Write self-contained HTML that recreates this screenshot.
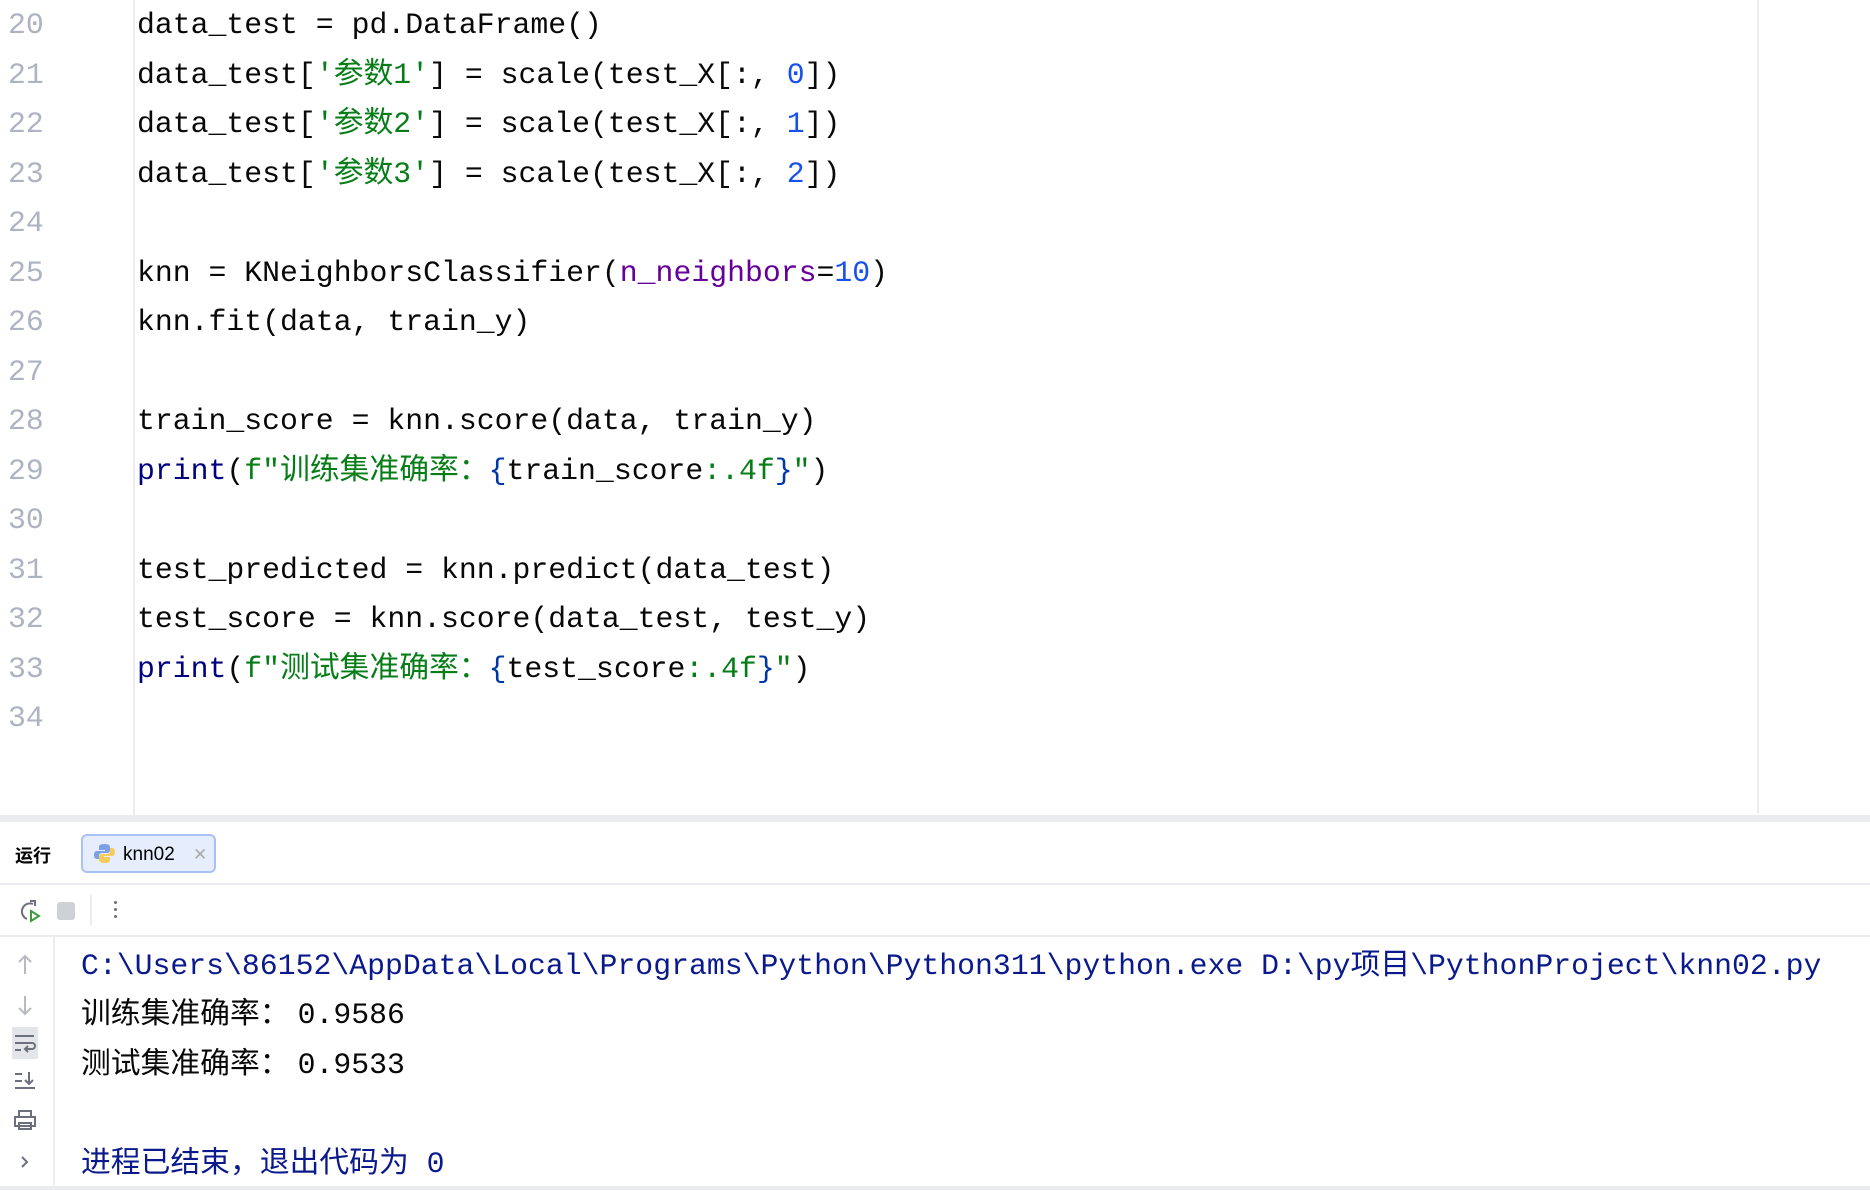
<!DOCTYPE html>
<html><head><meta charset="utf-8"><style>
*{margin:0;padding:0;box-sizing:border-box}
body{width:1870px;height:1190px;background:#fff;position:relative;overflow:hidden;font-family:"Liberation Mono","Noto Sans CJK SC",monospace;font-size:29.8px;color:#080808}
.ln{position:absolute;left:8px;color:#aeb3c2;line-height:49.5px;height:49.5px}
.cl{position:absolute;left:137px;line-height:49.5px;height:49.5px;white-space:pre}
.n{color:#1750eb}.s{color:#067d17}.k{color:#660099}.b{color:#000080}.br{color:#0037a6}
.cj{font-family:"Noto Sans CJK SC",sans-serif;line-height:0}
.con{position:absolute;left:81px;white-space:pre;line-height:49.5px;height:49.5px}
</style></head><body>
<div style="position:absolute;left:133px;top:0;width:2px;height:815px;background:#ebecf0"></div>
<div style="position:absolute;left:1757px;top:0;width:2px;height:813px;background:#ebecf0"></div>
<div class="ln" style="top:1px">20</div><div class="cl" style="top:1px">data_test = pd.DataFrame()</div>
<div class="ln" style="top:50.5px">21</div><div class="cl" style="top:50.5px">data_test[<span class="s">'<span class="cj">参数</span>1'</span>] = scale(test_X[:, <span class="n">0</span>])</div>
<div class="ln" style="top:100px">22</div><div class="cl" style="top:100px">data_test[<span class="s">'<span class="cj">参数</span>2'</span>] = scale(test_X[:, <span class="n">1</span>])</div>
<div class="ln" style="top:149.5px">23</div><div class="cl" style="top:149.5px">data_test[<span class="s">'<span class="cj">参数</span>3'</span>] = scale(test_X[:, <span class="n">2</span>])</div>
<div class="ln" style="top:199px">24</div>
<div class="ln" style="top:248.5px">25</div><div class="cl" style="top:248.5px">knn = KNeighborsClassifier(<span class="k">n_neighbors</span>=<span class="n">10</span>)</div>
<div class="ln" style="top:298px">26</div><div class="cl" style="top:298px">knn.fit(data, train_y)</div>
<div class="ln" style="top:347.5px">27</div>
<div class="ln" style="top:397px">28</div><div class="cl" style="top:397px">train_score = knn.score(data, train_y)</div>
<div class="ln" style="top:446.5px">29</div><div class="cl" style="top:446.5px"><span class="b">print</span>(<span class="s">f"<span class="cj">训练集准确率：</span></span><span class="br">{</span>train_score<span class="s">:.4f</span><span class="br">}</span><span class="s">"</span>)</div>
<div class="ln" style="top:496px">30</div>
<div class="ln" style="top:545.5px">31</div><div class="cl" style="top:545.5px">test_predicted = knn.predict(data_test)</div>
<div class="ln" style="top:595px">32</div><div class="cl" style="top:595px">test_score = knn.score(data_test, test_y)</div>
<div class="ln" style="top:644.5px">33</div><div class="cl" style="top:644.5px"><span class="b">print</span>(<span class="s">f"<span class="cj">测试集准确率：</span></span><span class="br">{</span>test_score<span class="s">:.4f</span><span class="br">}</span><span class="s">"</span>)</div>
<div class="ln" style="top:694px">34</div>

<div style="position:absolute;left:0;top:815px;width:1870px;height:7px;background:#ebecf0"></div>
<div style="position:absolute;left:15px;top:840px;font-family:'Noto Sans CJK SC',sans-serif;font-size:18px;font-weight:bold;line-height:30px;color:#000">运行</div>
<div style="position:absolute;left:81px;top:834px;width:135px;height:39px;border:2px solid #a9c1f5;background:#e6edfd;border-radius:6px"></div>
<svg style="position:absolute;left:94px;top:843px" width="21" height="21" viewBox="0 0 21 21"><path d="M10 1c-4 0-5 1.5-5 3v3h6v1H3c-2 0-3 1.5-3 4s1 4 3 4h2v-3c0-2 1.5-3 3-3h5c1.5 0 3-1 3-3V4c0-2-2-3-6-3z" fill="#7ba0e8"/><path d="M11 20c4 0 5-1.5 5-3v-3h-6v-1h8c2 0 3-1.5 3-4s-1-4-3-4h-2v3c0 2-1.5 3-3 3H8c-1.5 0-3 1-3 3v3c0 2 2 3 6 3z" fill="#f5cb5c"/></svg>
<div style="position:absolute;left:123px;top:840px;font-family:'Liberation Sans',sans-serif;font-size:19px;line-height:30px;color:#000">knn02</div>
<div style="position:absolute;left:193px;top:840px;font-family:'Liberation Sans',sans-serif;font-size:17px;line-height:30px;color:#aaa">✕</div>
<div style="position:absolute;left:0;top:883px;width:1870px;height:2px;background:#ebecf0"></div>
<svg style="position:absolute;left:16px;top:898px" width="26" height="26" viewBox="0 0 26 26"><path d="M17 6a8 8 0 1 0-6 15" fill="none" stroke="#6c707e" stroke-width="2"/><path d="M14 3h5v5" fill="none" stroke="#6c707e" stroke-width="2"/><path d="M15 13l8 5-8 5z" fill="none" stroke="#3d9b3d" stroke-width="2"/></svg>
<div style="position:absolute;left:57px;top:902px;width:18px;height:18px;background:#cfd1d6;border-radius:3px"></div>
<div style="position:absolute;left:90px;top:895px;width:2px;height:30px;background:#ebecf0"></div>
<div style="position:absolute;left:114px;top:901px;width:3px;height:3px;background:#6c707e;border-radius:2px;box-shadow:0 7px 0 #6c707e,0 14px 0 #6c707e"></div>
<div style="position:absolute;left:0;top:935px;width:1870px;height:2px;background:#ebecf0"></div>
<div style="position:absolute;left:53px;top:937px;width:2px;height:253px;background:#ebecf0"></div>
<svg style="position:absolute;left:12px;top:950px" width="26" height="230" viewBox="0 0 26 230" fill="none" stroke="#b8bac0" stroke-width="2">
<path d="M13 24V6M7 12l6-6 6 6"/><path d="M13 46v18M7 58l6 6 6-6"/>
<rect x="-4" y="77" width="33" height="32" rx="5" fill="#e4e5e9" stroke="none"/>
<path d="M3 86h19M3 93h17a3 3 0 0 1 0 6h-6M3 100h6M16 96l-3 3 3 3" stroke="#6c707e"/>
<path d="M3 124h7M3 131h7M3 138h20M17 122v12M13 130l4 4 4-4" stroke="#6c707e"/>
<path d="M7 167v-6h12v6M3 167h20v9H3zM7 173h12v6H7z" stroke="#6c707e"/>
<path d="M10 207l5 5-5 5" stroke="#6c707e"/></svg>
<div class="con" style="top:942px;color:#0a1a8c">C:\Users\86152\AppData\Local\Programs\Python\Python311\python.exe D:\py<span class="cj">项目</span>\PythonProject\knn02.py</div>
<div class="con" style="top:991px"><span class="cj">训练集准确率：</span><span style="margin-left:8px">0.9586</span></div>
<div class="con" style="top:1041px"><span class="cj">测试集准确率：</span><span style="margin-left:8px">0.9533</span></div>
<div class="con" style="top:1140px;color:#0a1a8c"><span class="cj">进程已结束，退出代码为</span> 0</div>
<div style="position:absolute;left:0;top:1186px;width:1870px;height:4px;background:#ebecf0"></div>
</body></html>
